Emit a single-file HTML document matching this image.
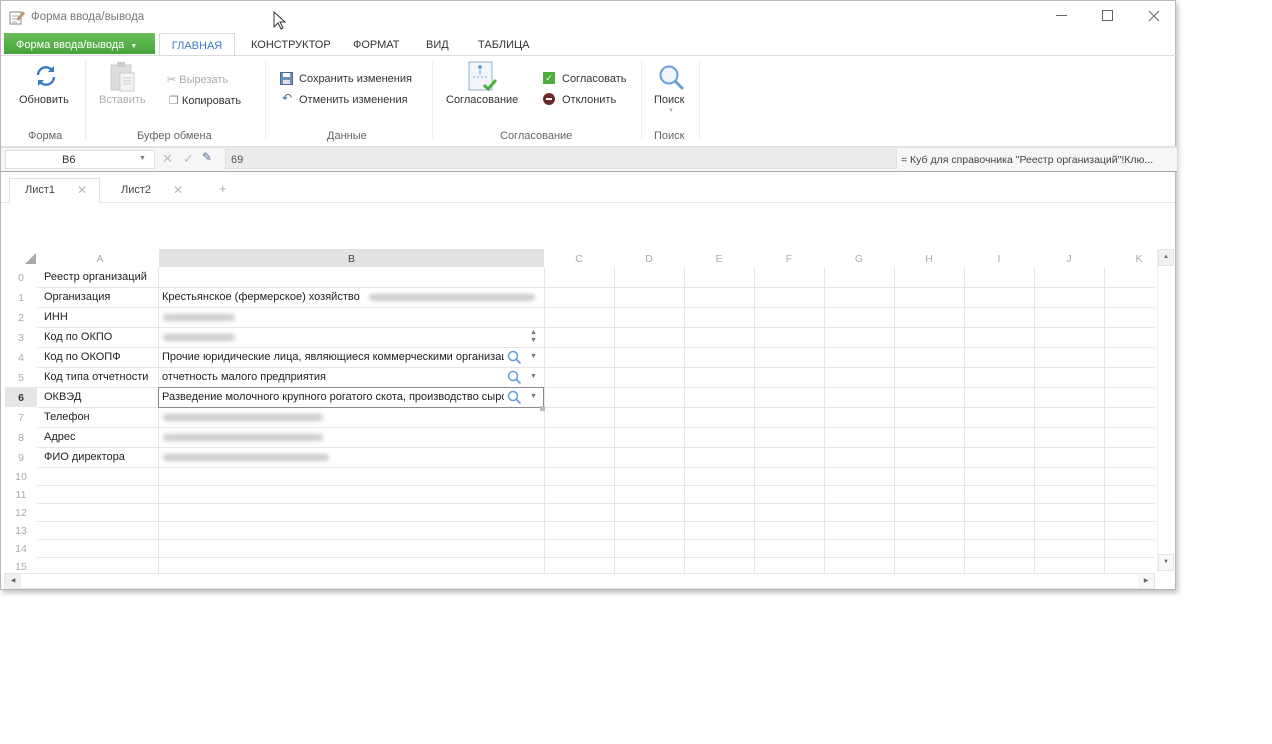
<!DOCTYPE html>
<html><head><meta charset="utf-8"><style>
*{margin:0;padding:0;box-sizing:border-box}
body{width:1272px;height:744px;background:#fff;font-family:"Liberation Sans","DejaVu Sans",sans-serif;font-size:11px;color:#333;position:relative;overflow:hidden}
.a{position:absolute;white-space:nowrap}
.win{position:absolute;left:0;top:0;width:1176px;height:590px;border:1px solid #b8b8b8;box-shadow:2px 3px 5px rgba(0,0,0,.25);background:#fff}
.hl{position:absolute;height:1px;background:#e6e6e6}
.vl{position:absolute;width:1px;background:#e6e6e6}
.rn{position:absolute;left:0;width:40px;text-align:center;color:#aaa;font-size:10.5px}
.ct{position:absolute;font-size:11px;color:#222}
.blur{position:absolute;height:7px;background:#ccc;filter:blur(2px);border-radius:3px}
.col{position:absolute;top:252px;text-align:center;color:#aaa;font-size:10.5px}
</style></head><body>
<div class="win">
<!-- title -->
<svg class="a" style="left:8px;top:8px" width="16" height="16" viewBox="0 0 16 16"><rect x="1" y="3" width="11" height="12" fill="#fff" stroke="#888"/><path d="M3 7h7M3 10h7M3 13h5" stroke="#aaa"/><path d="M8 10l6-7 1.5 1.5-6 7z" fill="#e3a33a" stroke="#888" stroke-width=".6"/></svg>
<div class="a" style="left:30px;top:10px;color:#777;font-size:11.5px">Форма ввода/вывода</div>
<svg class="a" style="left:272px;top:10px" width="14" height="20"><path d="M1 1v15l4-4 3 6 2-1-3-6h5z" fill="#fff" stroke="#333"/></svg>
<div class="a" style="left:1055px;top:14px;width:11px;height:1px;background:#666"></div>
<div class="a" style="left:1101px;top:9px;width:11px;height:11px;border:1px solid #666"></div>
<svg class="a" style="left:1147px;top:9px" width="12" height="12"><path d="M1 1l10 10M11 1L1 11" stroke="#666"/></svg>
<!-- tabs -->
<div class="a" style="left:3px;top:32px;width:151px;height:21px;background:linear-gradient(#6cbf5a,#46a23b);color:#fff;font-size:11px;padding:6px 0 0 12px">Форма ввода/вывода &nbsp;<span style="font-size:7px">▼</span></div>
<div class="a" style="left:158px;top:32px;width:76px;height:23px;border:1px solid #dcdcdc;border-bottom:none;background:#fff;color:#3a7bc8;text-align:center;padding-top:6px;font-size:11px">ГЛАВНАЯ</div>
<div class="a" style="left:250px;top:38px;font-size:11px;color:#333">КОНСТРУКТОР</div>
<div class="a" style="left:352px;top:38px;font-size:11px;color:#333">ФОРМАТ</div>
<div class="a" style="left:425px;top:38px;font-size:11px;color:#333">ВИД</div>
<div class="a" style="left:477px;top:38px;font-size:11px;color:#333">ТАБЛИЦА</div>
<div class="a" style="left:0;top:54px;width:1176px;height:1px;background:#dcdcdc"></div>
<!-- ribbon -->
<svg class="a" style="left:33px;top:63px" width="24" height="24" viewBox="0 0 24 24"><path d="M4 11a8 8 0 0 1 14-5" fill="none" stroke="#3a7bc8" stroke-width="2.5"/><path d="M20 2v6h-6z" fill="#3a7bc8"/><path d="M20 13a8 8 0 0 1-14 5" fill="none" stroke="#3a7bc8" stroke-width="2.5"/><path d="M4 22v-6h6z" fill="#3a7bc8"/></svg>
<div class="a" style="left:18px;top:93px;color:#333">Обновить</div>
<div class="a" style="left:84px;top:60px;width:1px;height:78px;background:#ececec"></div>
<svg class="a" style="left:108px;top:60px" width="28" height="32"><rect x="2" y="4" width="20" height="25" fill="#ddd" stroke="#ccc"/><rect x="8" y="1" width="8" height="5" fill="#ccc"/><rect x="11" y="12" width="14" height="18" fill="#f3f3f3" stroke="#ccc"/><path d="M14 17h8M14 20h8M14 23h8" stroke="#ccc"/></svg>
<div class="a" style="left:98px;top:93px;color:#aaa">Вставить</div>
<div class="a" style="left:166px;top:72px;color:#aaa">✂ Вырезать</div>
<div class="a" style="left:168px;top:93px;color:#333"><span style="color:#888">❐</span> Копировать</div>
<div class="a" style="left:264px;top:60px;width:1px;height:78px;background:#ececec"></div>
<svg class="a" style="left:279px;top:71px" width="13" height="13"><rect x=".5" y=".5" width="12" height="12" fill="#6f8fb8" stroke="#4a6a98"/><rect x="3" y="1" width="7" height="4" fill="#fff"/><rect x="3" y="8" width="7" height="4" fill="#dde"/></svg>
<div class="a" style="left:298px;top:72px;color:#333">Сохранить изменения</div>
<div class="a" style="left:281px;top:90px;color:#4a6a98;font-size:12px">↶</div>
<div class="a" style="left:298px;top:93px;color:#333">Отменить изменения</div>
<div class="a" style="left:431px;top:60px;width:1px;height:78px;background:#ececec"></div>
<svg class="a" style="left:467px;top:60px" width="32" height="32"><rect x="1" y="1" width="23" height="28" fill="#f2f6fb" stroke="#8fb0d6"/><circle cx="12" cy="6" r="2" fill="#6a9ed6"/><path d="M12 9v5" stroke="#6a9ed6"/><path d="M5 16h14" stroke="#6a9ed6" stroke-dasharray="2 2"/><path d="M16 24l4 4 8-9" fill="none" stroke="#4cae3b" stroke-width="3"/></svg>
<div class="a" style="left:445px;top:93px;color:#333">Согласование</div>
<div class="a" style="left:542px;top:71px;width:12px;height:12px;background:#4cae3b;color:#fff;font-size:9px;text-align:center;line-height:12px">✓</div>
<div class="a" style="left:561px;top:72px;color:#333">Согласовать</div>
<div class="a" style="left:542px;top:92px;width:12px;height:12px;border-radius:50%;background:#6b2a2a"></div>
<div class="a" style="left:545px;top:97px;width:6px;height:2px;background:#fff"></div>
<div class="a" style="left:561px;top:93px;color:#333">Отклонить</div>
<div class="a" style="left:640px;top:60px;width:1px;height:78px;background:#ececec"></div>
<svg class="a" style="left:657px;top:63px" width="28" height="28"><circle cx="11" cy="11" r="8.5" fill="#eef5fc" stroke="#6a9ed6" stroke-width="2"/><path d="M17 17l8 8" stroke="#6a9ed6" stroke-width="3"/></svg>
<div class="a" style="left:653px;top:93px;color:#333">Поиск</div>
<div class="a" style="left:667px;top:107px;color:#aaa;font-size:6px">▼</div>
<div class="a" style="left:698px;top:60px;width:1px;height:78px;background:#ececec"></div>
<div class="a" style="left:27px;top:129px;color:#666">Форма</div>
<div class="a" style="left:136px;top:129px;color:#666">Буфер обмена</div>
<div class="a" style="left:326px;top:129px;color:#666">Данные</div>
<div class="a" style="left:499px;top:129px;color:#666">Согласование</div>
<div class="a" style="left:653px;top:129px;color:#666">Поиск</div>
<div class="a" style="left:0;top:145px;width:1176px;height:2px;background:#e2e2e2"></div>
<!-- formula bar -->
<div class="a" style="left:0;top:147px;width:1176px;height:23px;background:#f6f6f6"></div>
<div class="a" style="left:4px;top:149px;width:150px;height:19px;background:#fff;border:1px solid #e0e0e0"></div>
<div class="a" style="left:61px;top:153px;color:#333">B6</div>
<div class="a" style="left:138px;top:154px;color:#777;font-size:7px">▼</div>
<div class="a" style="left:161px;top:150px;color:#bbb;font-size:13px">✕</div>
<div class="a" style="left:182px;top:150px;color:#bbb;font-size:13px">✓</div>
<div class="a" style="left:201px;top:149px;color:#4a6a98;font-size:12px">✎</div>
<div class="a" style="left:224px;top:148px;width:672px;height:20px;background:#ebebeb;border:1px solid #e0e0e0"></div>
<div class="a" style="left:230px;top:153px;color:#555">69</div>
<div class="a" style="left:900px;top:153px;color:#444;font-size:10.5px">= Куб для справочника "Реестр организаций"!Клю...</div>
<div class="a" style="left:0;top:170px;width:1176px;height:1px;background:#aaa"></div>
<!-- sheet tabs -->
<div class="a" style="left:8px;top:177px;width:91px;height:25px;border:1px solid #e0e0e0;border-bottom:none;background:#fff"></div>
<div class="a" style="left:24px;top:183px;color:#444">Лист1</div>
<div class="a" style="left:76px;top:182px;color:#bbb;font-size:12px">✕</div>
<div class="a" style="left:120px;top:183px;color:#444">Лист2</div>
<div class="a" style="left:172px;top:182px;color:#bbb;font-size:12px">✕</div>
<div class="a" style="left:218px;top:180px;color:#aaa;font-size:13px">+</div>
<div class="a" style="left:99px;top:201px;width:1075px;height:1px;background:#e6e6e6"></div>
<div class="a" style="left:0;top:201px;width:8px;height:1px;background:#e6e6e6"></div>
<!-- grid -->
<div class="a" style="left:158px;top:248px;width:385px;height:18px;background:#e2e2e2"></div>
<svg class="a" style="left:24px;top:252px" width="12" height="12"><path d="M11 0v11H0z" fill="#aaa"/></svg>
<div class="col" style="left:40px;width:118px">A</div>
<div class="col" style="left:158px;width:385px;color:#444">B</div>
<div class="col" style="left:543px;width:70px">C</div>
<div class="col" style="left:613px;width:70px">D</div>
<div class="col" style="left:683px;width:70px">E</div>
<div class="col" style="left:753px;width:70px">F</div>
<div class="col" style="left:823px;width:70px">G</div>
<div class="col" style="left:893px;width:70px">H</div>
<div class="col" style="left:963px;width:70px">I</div>
<div class="col" style="left:1033px;width:70px">J</div>
<div class="col" style="left:1103px;width:70px">K</div>
<!-- vertical lines -->
<div class="vl" style="left:157px;top:266px;height:306px"></div>
<div class="vl" style="left:543px;top:266px;height:306px"></div>
<div class="vl" style="left:613px;top:266px;height:306px"></div>
<div class="vl" style="left:683px;top:266px;height:306px"></div>
<div class="vl" style="left:753px;top:266px;height:306px"></div>
<div class="vl" style="left:823px;top:266px;height:306px"></div>
<div class="vl" style="left:893px;top:266px;height:306px"></div>
<div class="vl" style="left:963px;top:266px;height:306px"></div>
<div class="vl" style="left:1033px;top:266px;height:306px"></div>
<div class="vl" style="left:1103px;top:266px;height:306px"></div>
<!-- horizontal lines -->
<div class="hl" style="left:36px;top:286px;width:1118px"></div>
<div class="hl" style="left:36px;top:306px;width:1118px"></div>
<div class="hl" style="left:36px;top:326px;width:1118px"></div>
<div class="hl" style="left:36px;top:346px;width:1118px"></div>
<div class="hl" style="left:36px;top:366px;width:1118px"></div>
<div class="hl" style="left:36px;top:386px;width:1118px"></div>
<div class="hl" style="left:36px;top:406px;width:1118px"></div>
<div class="hl" style="left:36px;top:426px;width:1118px"></div>
<div class="hl" style="left:36px;top:446px;width:1118px"></div>
<div class="hl" style="left:36px;top:466px;width:1118px"></div>
<div class="hl" style="left:36px;top:484px;width:1118px"></div>
<div class="hl" style="left:36px;top:502px;width:1118px"></div>
<div class="hl" style="left:36px;top:520px;width:1118px"></div>
<div class="hl" style="left:36px;top:538px;width:1118px"></div>
<div class="hl" style="left:36px;top:556px;width:1118px"></div>
<div class="a" style="left:4px;top:386px;width:32px;height:20px;background:#e6e6e6"></div>
<!-- row numbers -->
<div class="rn" style="top:271px">0</div>
<div class="rn" style="top:291px">1</div>
<div class="rn" style="top:311px">2</div>
<div class="rn" style="top:331px">3</div>
<div class="rn" style="top:351px">4</div>
<div class="rn" style="top:371px">5</div>
<div class="rn" style="top:391px;color:#333;font-weight:bold">6</div>
<div class="rn" style="top:411px">7</div>
<div class="rn" style="top:431px">8</div>
<div class="rn" style="top:451px">9</div>
<div class="rn" style="top:470px">10</div>
<div class="rn" style="top:488px">11</div>
<div class="rn" style="top:506px">12</div>
<div class="rn" style="top:524px">13</div>
<div class="rn" style="top:542px">14</div>
<div class="rn" style="top:560px">15</div>
<!-- A column -->
<div class="ct" style="left:43px;top:270px">Реестр организаций</div>
<div class="ct" style="left:43px;top:290px">Организация</div>
<div class="ct" style="left:43px;top:310px">ИНН</div>
<div class="ct" style="left:43px;top:330px">Код по ОКПО</div>
<div class="ct" style="left:43px;top:350px">Код по ОКОПФ</div>
<div class="ct" style="left:43px;top:370px">Код типа отчетности</div>
<div class="ct" style="left:43px;top:390px">ОКВЭД</div>
<div class="ct" style="left:43px;top:410px">Телефон</div>
<div class="ct" style="left:43px;top:430px">Адрес</div>
<div class="ct" style="left:43px;top:450px">ФИО директора</div>
<!-- B column -->
<div class="ct" style="left:161px;top:290px">Крестьянское (фермерское) хозяйство</div>
<div class="blur" style="left:368px;top:293px;width:166px"></div>
<div class="blur" style="left:162px;top:313px;width:72px"></div>
<div class="blur" style="left:162px;top:333px;width:72px"></div>
<div class="a" style="left:529px;top:328px;color:#777;font-size:7px;line-height:8px">▲<br>▼</div>
<div class="a" style="left:158px;top:346px;width:345px;height:20px;overflow:hidden"><div class="ct" style="left:3px;top:4px">Прочие юридические лица, являющиеся коммерческими организациями</div></div>
<div class="ct" style="left:161px;top:370px">отчетность малого предприятия</div>
<div class="a" style="left:157px;top:386px;width:386px;height:21px;border:1px solid #888"></div>
<div class="a" style="left:539px;top:405px;width:5px;height:5px;background:#bbb"></div>
<div class="a" style="left:159px;top:387px;width:344px;height:19px;overflow:hidden"><div class="ct" style="left:2px;top:3px">Разведение молочного крупного рогатого скота, производство сырого молока</div></div>
<svg class="a" style="left:506px;top:349px" width="15" height="15"><circle cx="6" cy="6" r="4.5" fill="none" stroke="#6a9ed6" stroke-width="1.5"/><path d="M9.5 9.5l4 4" stroke="#6a9ed6" stroke-width="1.8"/></svg>
<svg class="a" style="left:506px;top:369px" width="15" height="15"><circle cx="6" cy="6" r="4.5" fill="none" stroke="#6a9ed6" stroke-width="1.5"/><path d="M9.5 9.5l4 4" stroke="#6a9ed6" stroke-width="1.8"/></svg>
<svg class="a" style="left:506px;top:389px" width="15" height="15"><circle cx="6" cy="6" r="4.5" fill="none" stroke="#6a9ed6" stroke-width="1.5"/><path d="M9.5 9.5l4 4" stroke="#6a9ed6" stroke-width="1.8"/></svg>
<div class="a" style="left:529px;top:352px;color:#777;font-size:7px">▼</div>
<div class="a" style="left:529px;top:372px;color:#777;font-size:7px">▼</div>
<div class="a" style="left:529px;top:392px;color:#777;font-size:7px">▼</div>
<div class="blur" style="left:162px;top:413px;width:160px"></div>
<div class="blur" style="left:162px;top:433px;width:160px"></div>
<div class="blur" style="left:162px;top:453px;width:166px"></div>
<!-- scrollbars -->
<div class="a" style="left:1156px;top:248px;width:17px;height:324px;border-left:1px solid #eee"></div>
<div class="a" style="left:1157px;top:248px;width:16px;height:17px;background:#f0f0f0;border:1px solid #e4e4e4;color:#666;font-size:6px;text-align:center;line-height:15px">▲</div>
<div class="a" style="left:1157px;top:553px;width:16px;height:17px;background:#f8f8f8;border:1px solid #e4e4e4;color:#666;font-size:6px;text-align:center;line-height:15px">▼</div>
<div class="a" style="left:3px;top:572px;width:1151px;height:16px;border:1px solid #e4e4e4"></div>
<div class="a" style="left:4px;top:573px;width:16px;height:14px;background:#f0f0f0;color:#666;font-size:6px;text-align:center;line-height:14px">◀</div>
<div class="a" style="left:1137px;top:573px;width:16px;height:14px;background:#f8f8f8;color:#666;font-size:6px;text-align:center;line-height:14px">▶</div>
</div>
</body></html>
